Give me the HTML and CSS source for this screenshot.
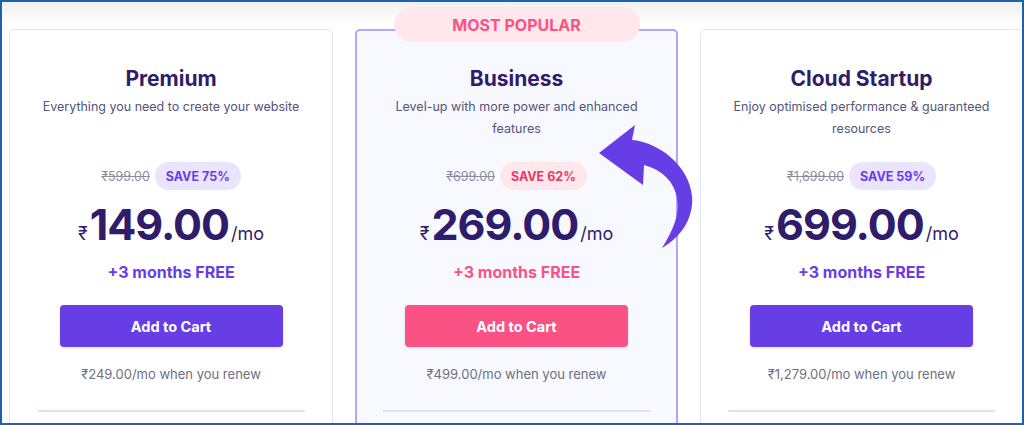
FILE: index.html
```html
<!DOCTYPE html>
<html>
<head>
<meta charset="utf-8">
<link rel="stylesheet" href="styles.css">
</head>
<body>
<div class="frame">
  <div class="card">
    <h2 class="title">Premium</h2>
    <p class="sub">Everything you need to create your website</p>
    <div class="save-row">
      <span class="old">₹599.00</span>
      <span class="save">SAVE 75%</span>
    </div>
    <div class="price"><span class="cur">₹</span><span class="amt">149.00</span><span class="per">/mo</span></div>
    <div class="free">+3 months FREE</div>
    <button class="cart">Add to Cart</button>
    <div class="renew">₹249.00/mo when you renew</div>
    <div class="divider"></div>
  </div>
  <div class="card popular">
    <div class="badge">MOST POPULAR</div>
    <h2 class="title">Business</h2>
    <p class="sub">Level-up with more power and enhanced features</p>
    <div class="save-row">
      <span class="old">₹699.00</span>
      <span class="save">SAVE 62%</span>
    </div>
    <div class="price"><span class="cur">₹</span><span class="amt">269.00</span><span class="per">/mo</span></div>
    <div class="free">+3 months FREE</div>
    <button class="cart">Add to Cart</button>
    <div class="renew">₹499.00/mo when you renew</div>
    <div class="divider"></div>
    <svg class="arrow" width="100" height="135" viewBox="0 0 100 135">
      <path d="M3 33 L39 5 L36 20 C62 22 93 45 96 76 C98 98 85 117 66 128 C77 110 84 95 81 78 C78 62 67 50 48 45 L47 65 Z" fill="#673de6"/>
    </svg>
  </div>
  <div class="card">
    <h2 class="title">Cloud Startup</h2>
    <p class="sub">Enjoy optimised performance &amp; guaranteed resources</p>
    <div class="save-row">
      <span class="old">₹1,699.00</span>
      <span class="save">SAVE 59%</span>
    </div>
    <div class="price"><span class="cur">₹</span><span class="amt">699.00</span><span class="per">/mo</span></div>
    <div class="free">+3 months FREE</div>
    <button class="cart">Add to Cart</button>
    <div class="renew">₹1,279.00/mo when you renew</div>
    <div class="divider"></div>
  </div>
</div>
</body>
</html>
```

FILE: styles.css
```css
* { box-sizing: border-box; }
html, body { margin: 0; padding: 0; }
body {
  font-family: "Inter", "Noto Sans", "DejaVu Sans", sans-serif;
  background: #fff;
}
.frame {
  width: 1024px;
  height: 425px;
  border: 2px solid #1d62ad;
  overflow: hidden;
  display: flex;
  gap: 22px;
  padding: 27px 0 0 7px;
  background: linear-gradient(#efefef 0, #ffffff 22px);
}
.card {
  position: relative;
  flex: 0 0 323px;
  height: 420px;
  background: #fff;
  border: 1px solid #dde6fb;
  border-radius: 5px;
  display: flex;
  flex-direction: column;
  align-items: center;
  padding-top: 35px;
}
.card:first-child { flex-basis: 324px; }
.popular {
  background: #f8f9ff;
  border: 2px solid #aea6ff;
  padding-top: 34px;
}
.badge {
  position: absolute;
  top: -24px;
  left: 50%;
  transform: translateX(-50%);
  width: 246px;
  height: 35px;
  border-radius: 18px;
  background: #ffe7ec;
  color: #fc5185;
  font-weight: 700;
  font-size: 16px;
  display: flex;
  align-items: center;
  justify-content: center;
}
.title {
  margin: 0;
  font-size: 21px;
  line-height: 28px;
  font-weight: 700;
  color: #2f1c6a;
}
.sub {
  margin: 3px 0 0;
  width: 270px;
  min-height: 44px;
  font-size: 12.5px;
  line-height: 22px;
  color: #55547a;
  text-align: center;
}
.save-row {
  margin-top: 22px;
  display: flex;
  align-items: center;
  gap: 5px;
}
.old {
  font-size: 12.5px;
  color: #8c8ca0;
  text-decoration: line-through;
}
.save {
  height: 28px;
  padding: 0 11px;
  border-radius: 14px;
  background: #ebe4ff;
  color: #673de6;
  font-size: 12.5px;
  font-weight: 700;
  display: flex;
  align-items: center;
}
.popular .save { background: #ffe7ec; color: #e63a6a; }
.price {
  margin-top: 11px;
  display: flex;
  align-items: baseline;
  color: #2f1c6a;
  height: 46px;
}
.cur { font-size: 18px; margin-right: 2px; }
.amt { font-size: 43px; font-weight: 700; letter-spacing: -1px; line-height: 46px; }
.per { font-size: 18px; margin-left: 2px; }
.free {
  margin-top: 15px;
  font-size: 16px;
  font-weight: 700;
  color: #673de6;
}
.popular .free { color: #fc5185; }
.cart {
  margin-top: 23px;
  width: 223px;
  height: 42px;
  border: 0;
  border-radius: 4px;
  background: #673de6;
  color: #fff;
  font-family: inherit;
  font-size: 14.5px;
  font-weight: 700;
  box-shadow: 0 1px 3px rgba(0,0,0,0.12);
}
.popular .cart { background: #fc5185; }
.renew {
  margin-top: 19px;
  font-size: 13px;
  color: #6d6f82;
}
.divider {
  margin-top: 28px;
  width: 267px;
  height: 2px;
  background: #dbe3fb;
}
.arrow {
  position: absolute;
  left: 239px;
  top: 89px;
}
```
